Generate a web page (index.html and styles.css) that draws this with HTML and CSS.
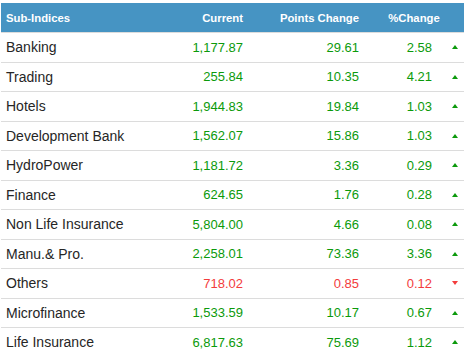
FILE: index.html
```html
<!DOCTYPE html>
<html>
<head>
<meta charset="utf-8">
<link rel="stylesheet" href="styles.css">
</head>
<body>
<div class="table">
  <div class="row head">
    <div class="c name">Sub-Indices</div>
    <div class="c num">Current</div>
    <div class="c num">Points Change</div>
    <div class="c pct-head">%Change</div>
  </div>
  <div class="row up"><div class="c name">Banking</div><div class="c num">1,177.87</div><div class="c num">29.61</div><div class="c num">2.58</div><div class="c arrow"><span class="tri"></span></div></div>
  <div class="row up"><div class="c name">Trading</div><div class="c num">255.84</div><div class="c num">10.35</div><div class="c num">4.21</div><div class="c arrow"><span class="tri"></span></div></div>
  <div class="row up"><div class="c name">Hotels</div><div class="c num">1,944.83</div><div class="c num">19.84</div><div class="c num">1.03</div><div class="c arrow"><span class="tri"></span></div></div>
  <div class="row up"><div class="c name">Development Bank</div><div class="c num">1,562.07</div><div class="c num">15.86</div><div class="c num">1.03</div><div class="c arrow"><span class="tri"></span></div></div>
  <div class="row up"><div class="c name">HydroPower</div><div class="c num">1,181.72</div><div class="c num">3.36</div><div class="c num">0.29</div><div class="c arrow"><span class="tri"></span></div></div>
  <div class="row up"><div class="c name">Finance</div><div class="c num">624.65</div><div class="c num">1.76</div><div class="c num">0.28</div><div class="c arrow"><span class="tri"></span></div></div>
  <div class="row up"><div class="c name">Non Life Insurance</div><div class="c num">5,804.00</div><div class="c num">4.66</div><div class="c num">0.08</div><div class="c arrow"><span class="tri"></span></div></div>
  <div class="row up"><div class="c name">Manu.&amp; Pro.</div><div class="c num">2,258.01</div><div class="c num">73.36</div><div class="c num">3.36</div><div class="c arrow"><span class="tri"></span></div></div>
  <div class="row down"><div class="c name">Others</div><div class="c num">718.02</div><div class="c num">0.85</div><div class="c num">0.12</div><div class="c arrow"><span class="tri"></span></div></div>
  <div class="row up"><div class="c name">Microfinance</div><div class="c num">1,533.59</div><div class="c num">10.17</div><div class="c num">0.67</div><div class="c arrow"><span class="tri"></span></div></div>
  <div class="row up"><div class="c name">Life Insurance</div><div class="c num">6,817.63</div><div class="c num">75.69</div><div class="c num">1.12</div><div class="c arrow"><span class="tri"></span></div></div>
</div>
</body>
</html>
```
FILE: styles.css
```css
html, body {
  margin: 0;
  padding: 0;
  background: #fff;
}
body {
  font-family: "Liberation Sans", Arial, sans-serif;
  overflow: hidden;
}
.table {
  margin: 3px 0 0 1px;
  width: 463px;
}
.row {
  display: grid;
  grid-template-columns: 159px 88px 116px 73px 27px;
  align-items: center;
  box-sizing: border-box;
  height: 29.5px;
  border-bottom: 1px solid #dcdcdc;
}
.row.head {
  height: 30px;
  background: #4694c3;
  color: #fff;
  font-weight: bold;
  font-size: 11.3px;
  background-clip: padding-box;
}
.c {
  white-space: nowrap;
}
.name {
  padding-left: 5px;
  font-size: 14px;
  color: #262626;
}
.head .name {
  font-size: 11.3px;
  color: #fff;
}
.num {
  text-align: right;
  padding-right: 5px;
  font-size: 13px;
}
.head .num {
  font-size: 11.3px;
}
.pct-head {
  grid-column: 4 / 6;
  text-align: center;
}
.up .num { color: #0b9a0b; }
.down .num { color: #f33c3c; }
.arrow {
  display: flex;
  padding-left: 15px;
}
.tri {
  width: 0;
  height: 0;
  border-left: 3.5px solid transparent;
  border-right: 3.5px solid transparent;
}
.up .tri {
  border-bottom: 4px solid #0b9a0b;
}
.down .tri {
  border-top: 4px solid #f33c3c;
}
```
